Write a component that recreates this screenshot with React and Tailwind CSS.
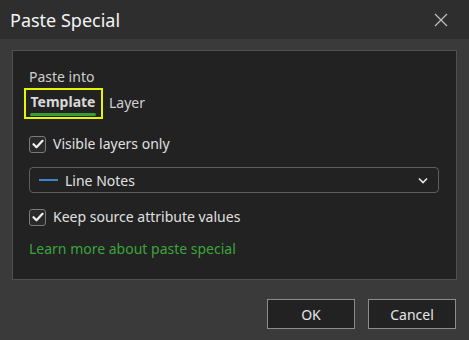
import React from "react";

function Check() {
  return (
    <div className="w-[17px] h-[17px] rounded-[3px] border border-[#7a7a7a] bg-[#2a2a2a] flex items-center justify-center">
      <svg width="12" height="10" viewBox="0 0 12 10" fill="none">
        <path d="M1.5 5.2 L4.5 8.2 L10.5 1.8" stroke="#f2f2f2" strokeWidth="2.2" strokeLinecap="round" strokeLinejoin="round" />
      </svg>
    </div>
  );
}

export default function App() {
  return (
    <div className="w-[469px] h-[340px] bg-[#3a3a3a] flex flex-col text-[#dcdcdc]" style={{ fontFamily: '"Noto Sans", "Open Sans", sans-serif' }}>
      <div className="h-[39px] bg-[#2e2e2e] flex items-center justify-between pl-[10px] pr-[21px] shrink-0">
        <span className="text-[18px] text-[#f4f4f4] leading-none">Paste Special</span>
        <svg width="14" height="14" viewBox="0 0 14 14">
          <path d="M1 1 L13 13 M13 1 L1 13" stroke="#bdbdbd" strokeWidth="1.3" />
        </svg>
      </div>
      <div className="mx-[12px] mt-[11px] h-[230px] bg-[#222222] border border-[#505050] px-[16px] pt-[17px] flex flex-col">
        <div className="text-[14px] leading-[18px] text-[#cfcfcf]">Paste into</div>
        <div className="flex items-center mt-[2px] -ml-[5px]">
          <div className="w-[79px] h-[31px] border-2 border-[#e6f500] pl-[4px] pr-[5px] pt-[2px] flex flex-col">
            <span className="text-[14px] font-bold leading-[19px] text-[#d8d8d8] text-center">Template</span>
            <div className="h-[3px] bg-[#3b9a3b] rounded-full mt-[2px]"></div>
          </div>
          <span className="text-[14px] ml-[6px] mb-[3px] text-[#d0d0d0]">Layer</span>
        </div>
        <div className="flex items-center gap-[7px] mt-[16px]">
          <Check />
          <span className="text-[14px] leading-[18px] text-[#e0e0e0]">Visible layers only</span>
        </div>
        <div className="mt-[14px] h-[26px] rounded-[4px] border border-[#5e5e5e] flex items-center pl-[9px] pr-[10px] w-[410px]">
          <div className="w-[19px] h-[2px] bg-[#3d86c6]"></div>
          <span className="ml-[7px] text-[14px] text-[#e0e0e0]">Line Notes</span>
          <svg className="ml-auto" width="10" height="7" viewBox="0 0 10 7">
            <path d="M1 1.5 L5 5.5 L9 1.5" stroke="#e8e8e8" strokeWidth="1.6" fill="none" />
          </svg>
        </div>
        <div className="flex items-center gap-[7px] mt-[15px]">
          <Check />
          <span className="text-[14px] leading-[18px] text-[#e0e0e0]">Keep source attribute values</span>
        </div>
        <div className="mt-[14px] text-[14px] leading-[18px] text-[#3aa53a]">Learn more about paste special</div>
      </div>
      <div className="flex justify-end gap-[13px] pr-[13px] mt-[19px]">
        <button className="w-[88px] h-[30px] bg-[#222222] border border-[#8c8c8c] text-[14px] text-[#e6e6e6]">OK</button>
        <button className="w-[88px] h-[30px] bg-[#222222] border border-[#8c8c8c] text-[14px] text-[#e6e6e6]">Cancel</button>
      </div>
    </div>
  );
}
